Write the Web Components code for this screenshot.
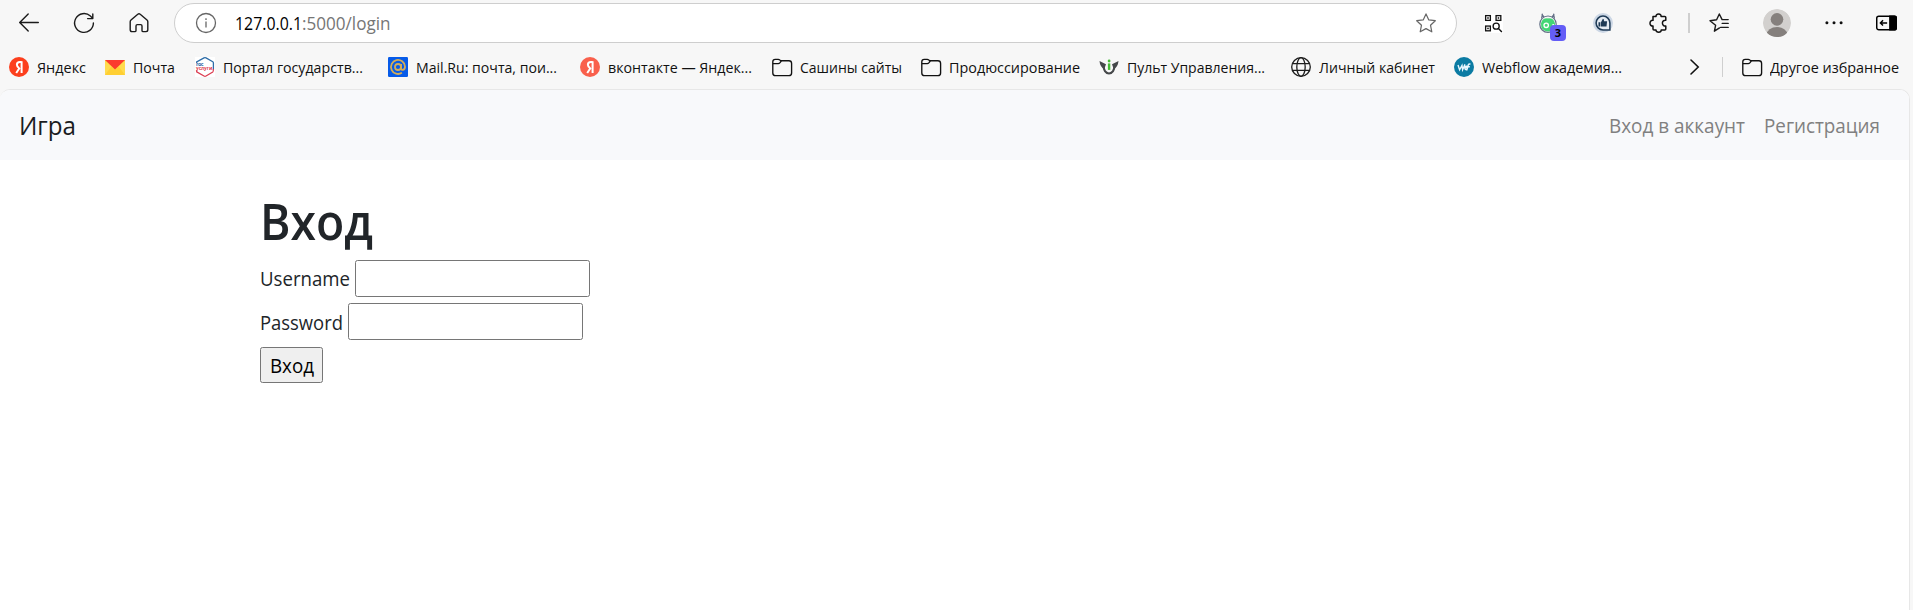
<!DOCTYPE html>
<html lang="ru">
<head>
<meta charset="utf-8">
<title>Вход</title>
<style>
html,body{margin:0;height:100%;overflow:hidden;background:#f7f7f7;font-family:"Open Sans","Noto Sans",sans-serif;color:#111}
</style>
</head>
<body>
<browser-window>
  <tool-bar slot="chrome"></tool-bar>
  <bookmarks-bar slot="chrome"></bookmarks-bar>
  <site-page></site-page>
</browser-window>
<script>
const ya = c => `<circle cx="10" cy="10" r="10" fill="${c}"/><path d="M12.6 4.2V16M12.6 5.1H10.9C9 5.1 7.9 6.2 7.9 7.8C7.9 9.4 8.8 10.2 10.2 11.2M10.7 10.8L7.2 16" fill="none" stroke="#fff" stroke-width="2"/>`;
const S = 'fill="none" stroke="#1b1b1b" stroke-width="1.4" stroke-linecap="round" stroke-linejoin="round"';
const ICONS = {
  back: `<g ${S}><path d="M19.3 9.5H.8M9.2 1L.7 9.5L9.2 18"/></g>`,
  reload: `<g ${S}><path d="M19.4 10A9.4 9.4 0 1 1 16.4 3.1L18.6 5.2M18.8 .9V5.6H13.6"/></g>`,
  home: `<g ${S}><path d="M1.2 8.8Q1.2 7.7 2 7L8.8 1.2Q10 .3 11.2 1.2L18 7Q18.8 7.7 18.8 8.8V16.8Q18.8 18.6 17 18.6H14.2Q13 18.6 13 17.4V13Q13 11.6 11.7 11.6H8.3Q7 11.6 7 13V17.4Q7 18.6 5.8 18.6H3Q1.2 18.6 1.2 16.8Z"/></g>`,
  info: `<g fill="none" stroke="#666" stroke-width="1.3"><circle cx="10" cy="10" r="9.5"/><path d="M10 8.6V14.4"/></g><circle cx="10" cy="6.1" r=".9" fill="#666"/>`,
  star: `<path d="M10 .9L12.8 6.9L19.3 7.7L14.5 12.2L15.8 18.8L10 15.6L4.2 18.8L5.5 12.2L.7 7.7L7.2 6.9Z" fill="none" stroke="#666" stroke-width="1.2" stroke-linejoin="round"/>`,
  qr: `<rect width="20" height="20" fill="#fff"/><g fill="none" stroke="#111" stroke-width="1.4"><rect x="1.7" y="1.7" width="5" height="5"/><rect x="12.7" y="1.7" width="5" height="5"/><rect x="1.7" y="12.7" width="5" height="5"/><circle cx="12.8" cy="12.8" r="3.2"/><path d="M15.2 15.2L18.8 18.9"/></g><g fill="#111"><rect x="3.4" y="3.4" width="1.6" height="1.6"/><rect x="14.4" y="3.4" width="1.6" height="1.6"/><rect x="3.4" y="14.4" width="1.6" height="1.6"/></g>`,
  bug: `<g fill="none" stroke="#647087" stroke-width="1.2"><path d="M3.5 5.5L4.5 .8M6.3 4.5L3.8 .8M13.7 4.5L16.2 .8M16.5 5.5L15.5 .8M6.3 4.5H13.7"/><circle cx="10" cy="11.2" r="8.2" fill="#f7f7f7"/></g><path d="M3 10.5Q4 5 10 5.4Q16 5 17 10.5Q17.5 18 10 18.6Q2.5 18 3 10.5Z" fill="#43d675"/><circle cx="8.2" cy="12.3" r="2.2" fill="#43d675" stroke="#fff" stroke-width="1.3"/><circle cx="15.2" cy="12" r="1" fill="#fff"/>`,
  like: `<circle cx="10" cy="10" r="10" fill="#ccd7e5"/><path d="M16.9 16.9H10A6.9 6.9 0 1 1 16.9 10Z" fill="#e4eaf2" stroke="#1e3a55" stroke-width="1.5"/><path d="M5.5 9.2H7.4V13.6H5.5ZM8 9.2L9.9 5.7Q11.3 5.7 11 8.3H14.1L13.5 13.6H8Z" fill="#1e3a55"/>`,
  puzzle: `<path d="M4.2 3.6H7.2C7.1 2 8 1 9.8 1S12.4 2 12.3 3.6H16Q17 3.6 17 4.6V7.2C15 7 13.6 8.2 13.6 10.1S15 13.2 17 13V16Q17 17 16 17H12.4C12.5 18.4 11.5 19.3 9.9 19.3S7.1 18.4 7.2 17H5.2Q4.2 17 4.2 16V13C2.4 13.2 1.2 12 1.2 10.2S2.4 7.1 4.2 7.3Z" transform="translate(.8)" fill="none" stroke="#111" stroke-width="1.5" stroke-linejoin="round"/>`,
  favs: `<g ${S}><path d="M10.5 14.9L5.4 18.2L6.6 12.3L1 7.7L7.6 6.8L10.3 1L13.1 6.6H19.2M13.2 10.4H19.2M11.6 14.4H19.2"/></g>`,
  avatar: `<defs><clipPath id="a"><circle cx="10" cy="10" r="10"/></clipPath></defs><g clip-path="url(#a)"><circle cx="10" cy="10" r="10" fill="#d2d0ce"/><circle cx="10" cy="7.4" r="4.5" fill="#85807d"/><ellipse cx="10" cy="18.2" rx="7.4" ry="5.4" fill="#85807d"/></g>`,
  dots: `<g fill="#111"><circle cx="2.9" cy="9.8" r="1.5"/><circle cx="10" cy="9.8" r="1.5"/><circle cx="17.1" cy="9.8" r="1.5"/></g>`,
  side: `<rect x=".7" y="3" width="18.6" height="13" rx="2" fill="none" stroke="#000" stroke-width="1.4"/><path d="M12.5 2.3H18Q20 2.3 20 4.3V14.7Q20 16.7 18 16.7H12.5Z"/><path d="M10.6 9.5H4.4M6.7 7L4.2 9.5L6.7 12" fill="none" stroke="#000" stroke-width="1.4"/>`,
  ya: ya('#fc3f1d'), ya2: ya('#f9604c'),
  mail: `<rect y="3" width="20" height="15" fill="#ffd633"/><path d="M0 3L10 12L20 3V18H0Z" fill="#ffdb4d"/><path d="M0 18L6.3 9.6L10 12.6L13.7 9.6L20 18Z" fill="#ffcf33"/><path d="M0 3H20L10 12.4Z" fill="#fb3a2e"/>`,
  gos: `<rect width="20" height="20" fill="#fff"/><path d="M1.7 6V5L9 .9Q10 .4 11 .9L17.8 4.8Q18.4 5.2 18.4 6V12.5" fill="none" stroke="#2d6da8" stroke-width="1.3"/><path d="M1.7 13.2V14.8L9 19Q10 19.6 11 19L17.8 15Q18.4 14.6 18.4 12" fill="none" stroke="#dc3c50" stroke-width="1.3"/><text x="1" y="9" font-size="5.4" font-weight="700" textLength="7.5" fill="#2d6da8">гос</text><text x="1" y="13.3" font-size="5.4" font-weight="700" textLength="16.4" lengthAdjust="spacingAndGlyphs" fill="#dc3c50">услуги</text>`,
  at: `<rect width="20" height="20" rx="1.2" fill="#075be8"/><g fill="none" stroke="#d3ad58" stroke-width="1.8"><circle cx="10" cy="10" r="3"/><path d="M13.1 7V11Q13.2 13.1 15 12.8Q17.2 12.2 17 9.5A7 7 0 1 0 13.9 15.8"/></g>`,
  folder: `<g fill="none" stroke="#111" stroke-width="1.35" stroke-linejoin="round"><path d="M.8 4.8Q.8 2.4 3.2 2.4H6.3Q7.1 2.4 7.7 3L9 3.7H16.9Q19.6 3.7 19.6 6.4V15.9Q19.6 18.6 16.9 18.6H3.5Q.8 18.6 .8 15.9Z"/><path d="M.9 6.6H6.3Q7.2 6.6 7.8 5.9L9.3 4"/></g>`,
  pult: `<path d="M4.6 7.5C4.4 13.4 6.6 16.4 10 16.4S15.6 13.4 15.4 7.5" fill="none" stroke="#45484a" stroke-width="2"/><path d="M.5 4L7 7.3L5.2 12.2Q.9 9.5 .5 4ZM19.5 4L13 7.3L14.8 12.2Q19.1 9.5 19.5 4Z" fill="#45484a"/><rect x="8.9" y="6.4" width="2.4" height="6.5" fill="#45bd35"/><circle cx="10.1" cy="4" r="1.4" fill="#45bd35"/>`,
  globe: `<g fill="none" stroke="#1d1d1d" stroke-width="1.3"><circle cx="10" cy="10" r="9.3"/><ellipse cx="10" cy="10" rx="4.2" ry="9.3"/><path d="M1.4 6.7H18.6M1.4 13.3H18.6"/></g>`,
  wf: `<circle cx="10" cy="10" r="10" fill="#0b7ba3"/><path d="M4 8L5.6 12.8L8 8.5L8.6 12.8L11 7.4M10.7 11.4Q13 10.5 12.6 9.2Q11.2 9 10.9 11.6Q11.5 13.4 13.3 12.2M12.8 13.2L14.3 7.8Q14.8 6.7 16.5 7.1M13.4 9.8H15.8" fill="none" stroke="#e9f7ff" stroke-width="1.4"/>`,
  chev: `<path d="M6 3L13.2 10L6 17" fill="none" stroke="#111" stroke-width="1.6" stroke-linecap="round"/>`
};
const define = (name, html, ready) => {
  const tpl = document.createElement('template');
  tpl.innerHTML = html;
  customElements.define(name, class extends HTMLElement {
    constructor(){ super(); this.attachShadow({mode:'open'}).append(tpl.content.cloneNode(true)); }
    connectedCallback(){ if (ready) ready(this, this.shadowRoot); }
  });
};

define('ui-icon', `<style>:host{display:block;flex:none;width:var(--size,20px);height:var(--size,20px)}svg{display:block;width:100%;height:100%;overflow:visible;font-family:"Open Sans",sans-serif}</style><svg viewBox="0 0 20 20" aria-hidden="true"></svg>`,
  (el, root) => { root.querySelector('svg').innerHTML = ICONS[el.getAttribute('name')]; });

// Label condensed or widened so the line takes exactly the given width.
define('fit-text', `<style>:host{display:block;flex:none;white-space:nowrap}span{display:inline-block;transform-origin:0 50%}</style><span><slot></slot></span>`,
  (el, root) => {
    const w = +el.getAttribute('w'), span = root.querySelector('span');
    el.style.width = w + 'px';
    span.style.transform = 'none';
    span.style.transform = `scaleX(${w / span.getBoundingClientRect().width})`;
  });

define('browser-window', `<style>:host{display:flex;flex-direction:column;width:1913px;height:610px;overflow:hidden}</style><slot name="chrome"></slot><slot></slot>`);

define('tool-bar', `<style>
:host{display:flex;align-items:center;height:46px;padding-left:19px;box-sizing:border-box}
ui-icon{margin-right:var(--after,0)}
.address{display:flex;align-items:center;box-sizing:border-box;width:1283px;height:40px;border:1px solid #cecece;border-radius:20px;background:#fff;padding-left:21px;margin-right:27px}
.url{display:flex;font-size:17.5px;line-height:24px;margin:-1px auto 0 19px}
.host{color:#000}.path{color:#767676}
.sep{width:2px;height:20px;background:#cfcfcf;margin-right:19px}
.badged{position:relative;margin-right:35px}
.badge{position:absolute;left:12px;top:12px;width:16px;height:16px;border-radius:4px;background:#645df6;color:#000;font-size:11px;line-height:16px;font-weight:700;text-align:center}
</style>
<ui-icon name="back" style="--after:35px"></ui-icon>
<ui-icon name="reload" style="--after:35px"></ui-icon>
<ui-icon name="home" style="--after:25px"></ui-icon>
<div class="address"><ui-icon name="info"></ui-icon><div class="url"><fit-text class="host" w="67">127.0.0.1</fit-text><fit-text class="path" w="88.5">:5000/login</fit-text></div><ui-icon name="star" style="--after:20px"></ui-icon></div>
<ui-icon name="qr" style="--size:19px;--after:35px"></ui-icon>
<div class="badged"><ui-icon name="bug"></ui-icon><span class="badge">3</span></div>
<ui-icon name="like" style="--after:35px"></ui-icon>
<ui-icon name="puzzle" style="--after:20px"></ui-icon>
<div class="sep"></div>
<ui-icon name="favs" style="--after:34px"></ui-icon>
<ui-icon name="avatar" style="--size:28px;--after:33px"></ui-icon>
<ui-icon name="dots" style="--after:32px"></ui-icon>
<ui-icon name="side" style="--size:21px"></ui-icon>`);

define('book-mark', `<style>:host{display:flex;align-items:center;flex:none;gap:7.5px;font-size:15px;line-height:22px;color:#111}</style><ui-icon></ui-icon>`,
  (el, root) => {
    const icon = document.createElement('ui-icon');
    icon.setAttribute('name', el.getAttribute('icon'));
    root.querySelector('ui-icon').replaceWith(icon);
    const label = document.createElement('fit-text');
    label.setAttribute('w', el.getAttribute('w'));
    label.textContent = el.getAttribute('label');
    root.append(label);
  });

const marks = [['ya','Яндекс',49,96],['mail','Почта',42,90],['gos','Портал государств...',140,193],['at','Mail.Ru: почта, пои...',141,192],['ya2','вконтакте — Яндек...',144,192],['folder','Сашины сайты',102,149],['folder','Продюссирование',131,178],['pult','Пульт Управления...',138,192],['globe','Личный кабинет',116,163],['wf','Webflow академия...',140,231]];
define('bookmarks-bar', `<style>
:host{display:flex;align-items:center;height:42px;padding-left:9px}
.sep{width:1px;height:20px;background:#cfcfcf;margin:0 19px 0 17px}
</style>` + marks.map(m => `<book-mark icon="${m[0]}" label="${m[1]}" w="${m[2]}" style="width:${m[3]}px"></book-mark>`).join('') +
`<ui-icon name="chev"></ui-icon><div class="sep"></div><book-mark icon="folder" label="Другое избранное" w="129"></book-mark>`);

define('site-nav', `<style>
:host{display:flex;align-items:center;height:70px;background:#f8f9fb;padding:0 29px 0 18.5px;font-size:19.5px;color:#808080}
.brand{font-size:25px;color:#1b1d1f;margin-right:auto}
nav{display:flex;gap:19px}
</style><fit-text class="brand" w="57">Игра</fit-text><nav><fit-text w="136">Вход в аккаунт</fit-text><fit-text w="116">Регистрация</fit-text></nav>`);

define('form-row', `<style>
:host{display:flex;align-items:center;height:37px;color:#212529;font-size:19.5px}
input{box-sizing:border-box;width:235px;height:37px;margin:0 0 0 5px;border:1px solid #767676;border-radius:2.5px;background:#fff}
</style><slot></slot><input>`);

define('login-form', `<style>
:host{display:block;padding:31px 0 0 260px}
h1{margin:0 0 9px;font-size:50px;line-height:60px;font-weight:600;color:#212529}
form-row{margin-bottom:6px}
button{display:block;box-sizing:border-box;width:63px;height:36px;margin-top:7px;padding:0 0 0 9px;border:1px solid #767676;border-radius:2.5px;background:#efefef;color:#000;font:19.5px/35px "Open Sans",sans-serif;text-align:left}
.low{margin-top:2px}
</style><h1><fit-text w="113">Вход</fit-text></h1>
<form-row><fit-text w="90">Username</fit-text></form-row>
<form-row><fit-text class="low" w="83">Password</fit-text></form-row>
<button type="button"><fit-text w="44">Вход</fit-text></button>`);

define('site-page', `<style>
:host{display:block;flex:1;box-sizing:border-box;width:1910px;margin-top:1px;border:solid #e7e7e7;border-width:1px 1px 0 0;border-radius:10px 10px 0 0;background:#fff;overflow:hidden}
</style><site-nav></site-nav><login-form></login-form>`);
</script>
</body>
</html>
